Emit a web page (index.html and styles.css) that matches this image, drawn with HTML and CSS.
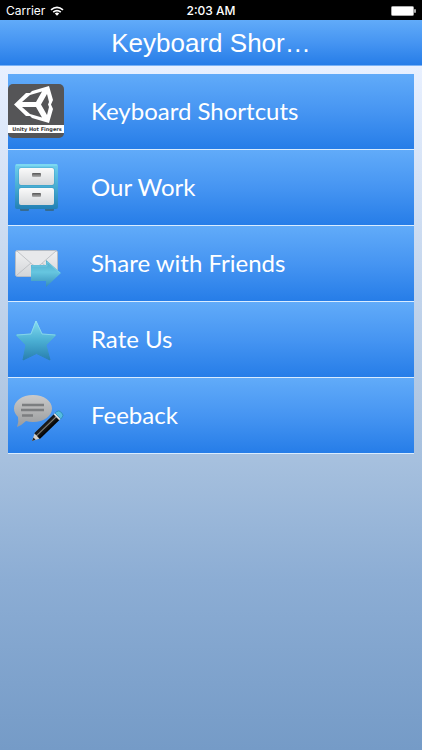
FILE: index.html
```html
<!DOCTYPE html>
<html lang="en">
<head>
<meta charset="utf-8">
<meta name="viewport" content="width=device-width, initial-scale=1">
<title>Keyboard Shortcuts</title>
<link rel="stylesheet" href="styles.css">
</head>
<body>
<div class="status">
  <div class="carrier">
    <span>Carrier</span>
    <svg class="wifi" viewBox="0 0 14 10" aria-hidden="true">
      <path d="M1 3.8Q7-1.2 13 3.8M3.2 6.1Q7 3 10.8 6.1" fill="none" stroke="#fff" stroke-width="1.7"/>
      <path d="M4.8 7.4Q7 5.6 9.2 7.4L7 9.8Z" fill="#fff"/>
    </svg>
  </div>
  <span class="time">2:03 AM</span>
  <svg class="battery" viewBox="0 0 25 10" aria-hidden="true">
    <rect x=".5" y=".5" width="22" height="9" rx="1" fill="#fff" stroke="#aaa"/>
    <rect x="23" y="3" width="2" height="4" rx="1" fill="#aaa"/>
  </svg>
</div>
<header class="bar"><h1>Keyboard Shor…</h1></header>
<main>
  <nav class="menu" aria-label="Main menu">
    <a href="#shortcuts">
      <svg class="icon" viewBox="0 0 56 56" aria-hidden="true">
        <rect x="0" y="0" width="56" height="54" rx="5" fill="#555557"/>
        <path d="M6 20.500L18 9H22L24 7L41 2L45 16L43 20.500L45 25L41 39L24 34L22 32H18Z" fill="#fff"/>
        <path d="M14 18L22 11L34 7.500L28 18ZM14 23H28L34 33.500L22 30ZM33 20.500L39 10L41 18L40 20.500L41 23L39 31Z" fill="#555557"/>
        <rect x="0" y="41" width="56" height="8" fill="#fff"/>
        <text class="logo-text" x="29" y="47" text-anchor="middle">Unity Hot Fingers</text>
      </svg>
      <span class="label">Keyboard Shortcuts</span>
    </a>
    <a href="#work">
      <svg class="icon" viewBox="0 0 56 56" aria-hidden="true">
        <defs>
          <linearGradient id="cabinet" x2="0" y2="1"><stop stop-color="#70d0ee"/><stop offset=".5" stop-color="#48add3"/><stop offset="1" stop-color="#2380b5"/></linearGradient>
          <linearGradient id="drawer" x2="0" y2="1"><stop stop-color="#fafafa"/><stop offset="1" stop-color="#d5d8db"/></linearGradient>
          <linearGradient id="handle" x2="0" y2="1"><stop stop-color="#555"/><stop offset="1" stop-color="#b0b0b0"/></linearGradient>
        </defs>
        <path d="M12 48H21V50Q21 51 20 51H13Q12 51 12 50ZM37 48H46V50Q46 51 45 51H38Q37 51 37 50Z" fill="#366b91"/>
        <rect x="7" y="4" width="43" height="45" rx="2" fill="url(#cabinet)"/>
        <path d="M8 5H49" stroke="#8be1f4"/>
        <rect x="10.500" y="7.500" width="36" height="18" rx="2" fill="#2d8cb4" opacity=".5"/>
        <rect x="10.500" y="27.500" width="36" height="18" rx="2" fill="#2d8cb4" opacity=".5"/>
        <rect x="11" y="8" width="35" height="17" rx="2" fill="url(#drawer)"/>
        <rect x="11" y="28" width="35" height="17" rx="2" fill="url(#drawer)"/>
        <rect x="24" y="13" width="9" height="4" rx="1" fill="url(#handle)"/>
        <rect x="24" y="33" width="9" height="4" rx="1" fill="url(#handle)"/>
      </svg>
      <span class="label">Our Work</span>
    </a>
    <a href="#share">
      <svg class="icon" viewBox="0 0 56 56" aria-hidden="true">
        <defs>
          <linearGradient id="envelope" x2="0" y2="1"><stop stop-color="#f1f2f3"/><stop offset="1" stop-color="#d3d5d8"/></linearGradient>
          <linearGradient id="arrow" x2="0" y2="1"><stop stop-color="#4fa9c9"/><stop offset=".45" stop-color="#66c6e0"/><stop offset="1" stop-color="#358db8"/></linearGradient>
        </defs>
        <rect x="7.500" y="14.500" width="42" height="26" rx="2" fill="url(#envelope)" stroke="#b4bcc6"/>
        <path d="M9 39L23 27M48 39L34 27" stroke="#bfc2c6" fill="none"/>
        <path d="M9 15L25 29Q28.500 32 32 29L48 15" stroke="#c0c3c7" fill="#e8e9eb"/>
        <path d="M23 29H38V24L53 37L38 51V45H23Z" fill="url(#arrow)"/>
        <path d="M24 30H39V26L52 37" fill="none" stroke="#80d5e9" opacity=".6"/>
      </svg>
      <span class="label">Share with Friends</span>
    </a>
    <a href="#rate">
      <svg class="icon" viewBox="0 0 56 56" aria-hidden="true">
        <defs><linearGradient id="star" x2="0" y2="1"><stop stop-color="#83dcf0"/><stop offset=".5" stop-color="#4bafd3"/><stop offset="1" stop-color="#287faf"/></linearGradient></defs>
        <path d="M28 9L34 22L48 23L38 33L42 48L28.500 41.500L15 48L18 33L8 23L23 22Z" fill="url(#star)" stroke="url(#star)" stroke-linejoin="round"/>
        <path d="M9 23L23 22L28 9L34 22L47 23" fill="none" stroke="#9ee4f3" opacity=".6"/>
      </svg>
      <span class="label">Rate Us</span>
    </a>
    <a href="#feedback">
      <svg class="icon" viewBox="0 0 56 56" aria-hidden="true">
        <defs>
          <linearGradient id="bubble" x2="0" y2="1"><stop stop-color="#cacaca"/><stop offset="1" stop-color="#999b9d"/></linearGradient>
          <linearGradient id="pencil" x2="1" y2="0"><stop stop-color="#111"/><stop offset=".3" stop-color="#222"/><stop offset=".42" stop-color="#8a8880"/><stop offset=".55" stop-color="#151515"/><stop offset="1" stop-color="#000"/></linearGradient>
        </defs>
        <path d="M25 7C36 7 44 13 44 20.500S36 34 25 34Q21 34 18 33Q14 37 9 39Q11 34 10 29Q6 25 6 20.500C6 13 14 7 25 7Z" fill="url(#bubble)"/>
        <path d="M14 17H36M13 22H36M14 27.500H25" stroke="#7c7e80" stroke-width="2.500"/>
        <g transform="translate(24 53) rotate(46)">
          <path d="M0 0L-4-8H4Z" fill="#d5d0c8"/>
          <path d="M0 0L-1.500-3.500H1.500Z" fill="#222"/>
          <rect x="-4" y="-35" width="8" height="28" fill="url(#pencil)"/>
          <rect x="-4" y="-36" width="8" height="2" fill="#ddd"/>
          <path d="M-4-36V-38Q-4-41 0-41T4-38V-36Z" fill="#55bde0" stroke="#2685b4" stroke-width=".7"/>
        </g>
      </svg>
      <span class="label">Feeback</span>
    </a>
  </nav>
</main>
</body>
</html>
```
FILE: styles.css
```css
* { box-sizing: border-box; }

body {
  margin: 0;
  min-height: 100vh;
  background: linear-gradient(#e8f0ff 66px, #a6c0de 460px, #8cadd4 580px, #759bc7 100%);
  font-family: Lato, "Liberation Sans", sans-serif;
  color: #fff;
}

.status {
  display: grid;
  grid-template-columns: 1fr auto 1fr;
  align-items: center;
  height: 20px;
  padding: 2px 6px 0;
  background: #000;
  font: 12px/16px Inter, sans-serif;
}

.carrier {
  display: flex;
  align-items: center;
  gap: 5px;
}

.wifi { width: 14px; height: 10px; }

.time { font-weight: 500; }

.battery {
  width: 25px;
  height: 10px;
  justify-self: end;
}

.bar {
  height: 46px;
  border-bottom: 1px solid #7ab2f6;
  background: linear-gradient(#61abf9, #4695f2 50%, #267de8);
  text-align: center;
}

.bar h1 {
  margin: 0;
  font: 26px/46px "Liberation Sans", sans-serif;
}

main { padding: 8px; }

.menu a {
  display: flex;
  align-items: center;
  gap: 27px;
  height: 76px;
  border-bottom: 1px solid #d9ecff;
  background: linear-gradient(#61abf9, #4695f2 50%, #267de8);
  color: #fff;
  font-size: 24px;
  line-height: 32px;
  text-decoration: none;
}

.label { padding-bottom: 2px; }

.icon {
  flex: none;
  width: 56px;
  height: 56px;
}

.logo-text {
  font: bold 5px "DejaVu Sans", sans-serif;
  fill: #333;
}
```
